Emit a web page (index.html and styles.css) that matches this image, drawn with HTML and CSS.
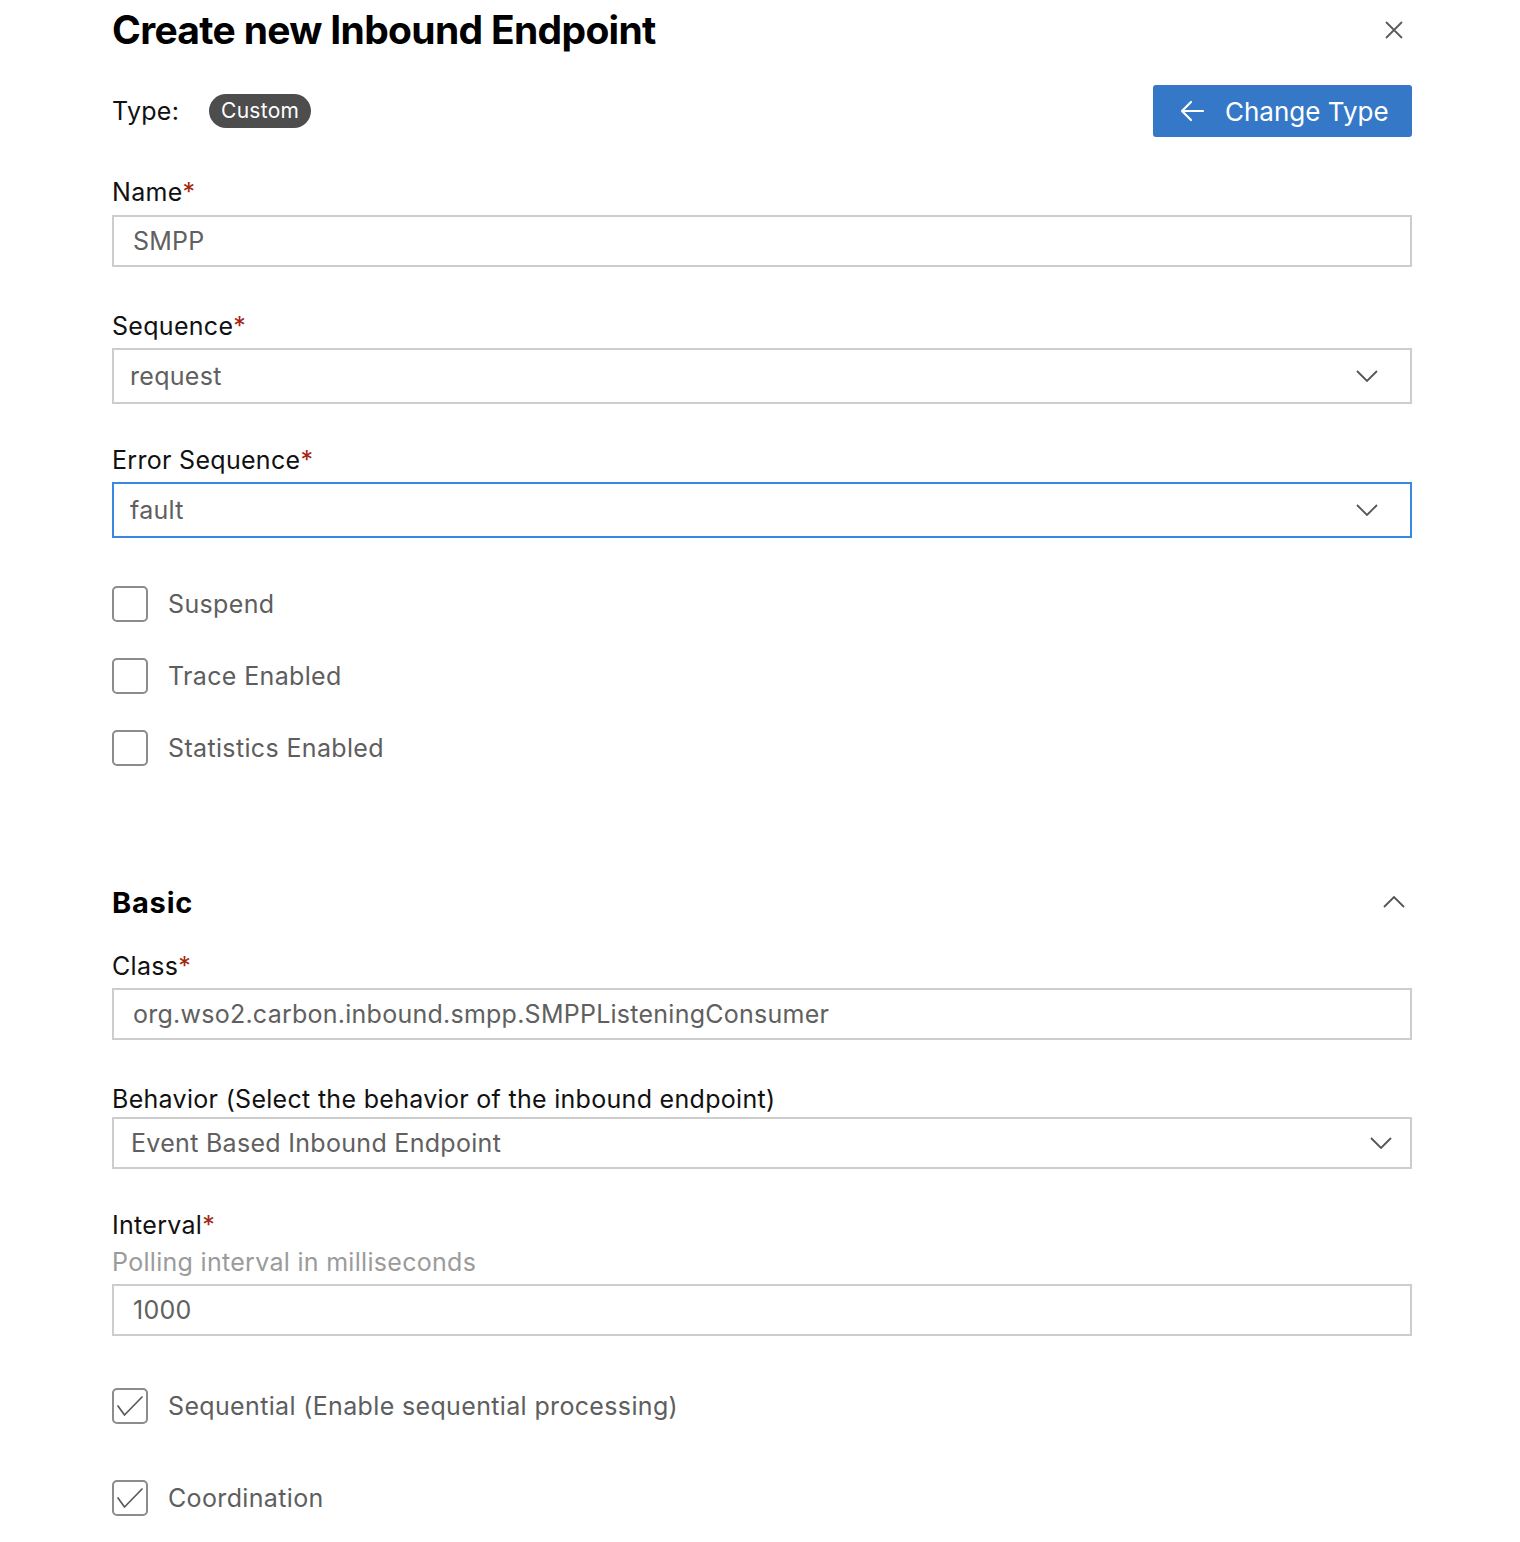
FILE: index.html
```html
<!DOCTYPE html>
<html>
<head>
<meta charset="utf-8">
<link rel="stylesheet" href="styles.css">
</head>
<body>
<div class="page">
  <div class="header">
    <h1 class="title">Create new Inbound Endpoint</h1>
    <button class="close" aria-label="Close">
      <svg width="20" height="20" viewBox="0 0 20 20"><path d="M2 2 L18 18 M18 2 L2 18" stroke="#5a5a5a" stroke-width="1.8" fill="none"/></svg>
    </button>
  </div>

  <div class="type-row">
    <div class="type-left">
      <span class="type-label">Type:</span>
      <span class="badge">Custom</span>
    </div>
    <button class="btn-primary">
      <svg width="26" height="22" viewBox="0 0 26 22"><path d="M24 11 H3 M12 2 L3 11 L12 20" stroke="#fff" stroke-width="2.2" fill="none" stroke-linecap="round" stroke-linejoin="round"/></svg>
      <span>Change Type</span>
    </button>
  </div>

  <div class="field f-name">
    <label class="label">Name<span class="req">*</span></label>
    <div class="input">SMPP</div>
  </div>

  <div class="field f-seq">
    <label class="label">Sequence<span class="req">*</span></label>
    <div class="select">
      <span>request</span>
      <svg class="chev" width="22" height="12" viewBox="0 0 22 12"><path d="M1 1 L11 11 L21 1" stroke="#555" stroke-width="1.8" fill="none"/></svg>
    </div>
  </div>

  <div class="field f-err">
    <label class="label">Error Sequence<span class="req">*</span></label>
    <div class="select focused">
      <span>fault</span>
      <svg class="chev" width="22" height="12" viewBox="0 0 22 12"><path d="M1 1 L11 11 L21 1" stroke="#555" stroke-width="1.8" fill="none"/></svg>
    </div>
  </div>

  <div class="checks">
    <div class="check"><span class="box"></span><span class="check-label">Suspend</span></div>
    <div class="check"><span class="box"></span><span class="check-label">Trace Enabled</span></div>
    <div class="check"><span class="box"></span><span class="check-label">Statistics Enabled</span></div>
  </div>

  <div class="section-head">
    <h2 class="section-title">Basic</h2>
    <svg class="chev-up" width="22" height="12" viewBox="0 0 22 12"><path d="M1 11 L11 1 L21 11" stroke="#555" stroke-width="1.8" fill="none"/></svg>
  </div>

  <div class="field f-class">
    <label class="label">Class<span class="req">*</span></label>
    <div class="input">org.wso2.carbon.inbound.smpp.SMPPListeningConsumer</div>
  </div>

  <div class="field f-beh">
    <label class="label">Behavior (Select the behavior of the inbound endpoint)</label>
    <div class="select select-sm">
      <span>Event Based Inbound Endpoint</span>
      <svg class="chev" width="22" height="12" viewBox="0 0 22 12"><path d="M1 1 L11 11 L21 1" stroke="#555" stroke-width="1.8" fill="none"/></svg>
    </div>
  </div>

  <div class="field f-int">
    <label class="label">Interval<span class="req">*</span></label>
    <div class="help">Polling interval in milliseconds</div>
    <div class="input">1000</div>
  </div>

  <div class="check checked c-seq">
    <span class="box"><svg width="32" height="32" viewBox="0 0 32 32"><path d="M4 16 L10.5 25 L28 7" stroke="#5a5a5a" stroke-width="1.7" fill="none" stroke-linecap="round" stroke-linejoin="round"/></svg></span>
    <span class="check-label">Sequential (Enable sequential processing)</span>
  </div>
  <div class="check checked c-coord">
    <span class="box"><svg width="32" height="32" viewBox="0 0 32 32"><path d="M4 16 L10.5 25 L28 7" stroke="#5a5a5a" stroke-width="1.7" fill="none" stroke-linecap="round" stroke-linejoin="round"/></svg></span>
    <span class="check-label">Coordination</span>
  </div>
</div>
</body>
</html>
```

FILE: styles.css
```css
* { box-sizing: border-box; }
html, body { margin: 0; padding: 0; background: #fff; }
body {
  font-family: Inter, "Noto Sans", "Liberation Sans", sans-serif;
  color: #111;
}
.page {
  width: 1520px;
  padding: 0 108px 0 112px;
}
.header {
  display: flex;
  align-items: center;
  justify-content: space-between;
  height: 60px;
}
.title {
  margin: 0;
  font-size: 39px;
  font-weight: 700;
  letter-spacing: -0.68px;
  line-height: 60px;
  color: #000;
}
.close {
  border: 0;
  background: none;
  padding: 0;
  width: 20px;
  height: 20px;
  margin-right: 8px;
  display: flex;
}
.type-row {
  margin-top: 25px;
  height: 52px;
  display: flex;
  align-items: center;
  justify-content: space-between;
}
.type-left { display: flex; align-items: center; }
.type-label {
  font-size: 25px;
  letter-spacing: 0.3px;
  color: #111;
  width: 97px;
}
.badge {
  background: #4d4d4d;
  color: #fff;
  font-size: 21px;
  letter-spacing: 0.3px;
  height: 34px;
  line-height: 34px;
  padding: 0 12px;
  border-radius: 17px;
}
.btn-primary {
  height: 52px;
  width: 259px;
  border: 0;
  border-radius: 3px;
  background: #3578c8;
  color: #fff;
  font-family: inherit;
  font-size: 26px;
  display: flex;
  align-items: center;
  padding: 0 0 0 26px;
  gap: 20px;
}
.field { display: flex; flex-direction: column; }
.label {
  font-size: 25px;
  letter-spacing: 0.3px;
  line-height: 30px;
  color: #111;
  margin-bottom: 8px;
}
.req { color: #a3260f; }
.input {
  height: 52px;
  border: 2px solid #cdcdcd;
  font-size: 25px;
  letter-spacing: 0.25px;
  color: #606060;
  display: flex;
  align-items: center;
  padding-left: 19px;
}
.select {
  height: 56px;
  border: 2px solid #cdcdcd;
  font-size: 25px;
  letter-spacing: 0.3px;
  color: #606060;
  display: flex;
  align-items: center;
  justify-content: space-between;
  padding: 0 32px 0 16px;
}
.select.focused { border-color: #3b88e2; }
.select-sm { height: 52px; padding-right: 18px; padding-left: 17px; }
.f-name { margin-top: 40px; }
.f-seq { margin-top: 44px; }
.f-seq .label, .f-err .label { margin-bottom: 7px; }
.f-err { margin-top: 41px; }
.checks {
  margin-top: 48px;
  display: flex;
  flex-direction: column;
  gap: 36px;
}
.check { display: flex; align-items: center; height: 36px; }
.box {
  width: 36px;
  height: 36px;
  border: 2px solid #8c8c8c;
  border-radius: 5px;
  margin-right: 20px;
  display: flex;
  align-items: center;
  justify-content: center;
  flex: none;
}
.check-label {
  font-size: 25px;
  letter-spacing: 0.35px;
  color: #5e5e5e;
}
.section-head {
  margin-top: 117px;
  height: 38px;
  display: flex;
  align-items: center;
  justify-content: space-between;
}
.section-title {
  margin: 0;
  font-size: 29px;
  font-weight: 700;
  color: #000;
  letter-spacing: 0.8px;
}
.chev-up { margin-right: 7px; }
.f-class { margin-top: 30px; }
.f-class .label { margin-bottom: 7px; }
.f-beh { margin-top: 44px; }
.f-beh .label { margin-bottom: 3px; }
.f-int { margin-top: 41px; }
.f-int .label { margin-bottom: 8px; }
.help {
  font-size: 25px;
  letter-spacing: 0.3px;
  line-height: 30px;
  color: #9b9b9b;
  margin-bottom: 7px;
  margin-top: -1px;
}
.c-seq { margin-top: 52px; }
.c-coord { margin-top: 56px; }
```
